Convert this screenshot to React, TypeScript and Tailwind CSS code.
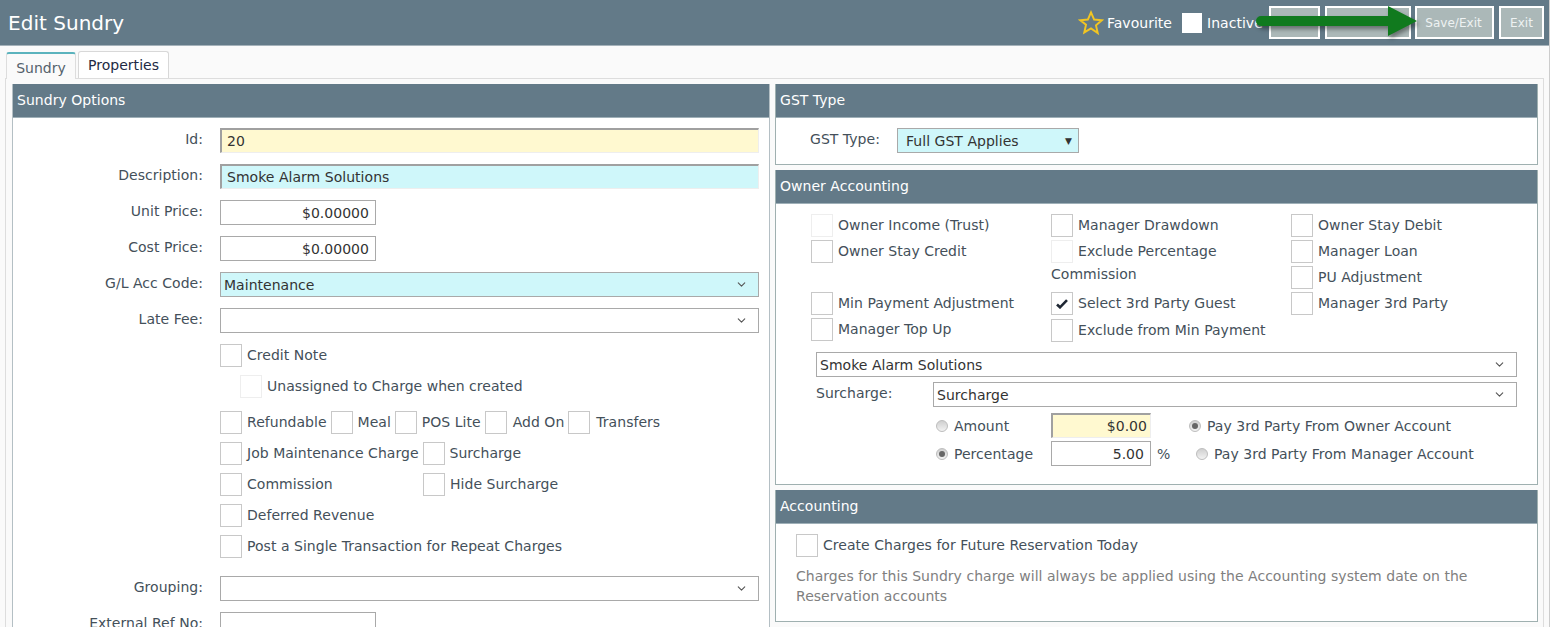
import React from 'react';
import { ChevronDown } from 'lucide-react';

const inputBase = 'h-[25px] border border-[#a9a9a9] text-[14px] text-[#333]';
const plainInput = `${inputBase} leading-[24px]`;
const insetInput = 'h-[25px] border-t-2 border-l-2 border-r border-b border-[#a0a0a0] border-r-[#eee] border-b-[#eee] text-[14px] text-[#333] leading-[22px]';

function Box({ faint, checked }: { faint?: boolean; checked?: boolean }) {
  return (
    <span className={`w-[22px] h-[23px] shrink-0 border bg-white flex items-center justify-center ${faint ? 'border-[#eeeeee]' : 'border-[#c8c8c8]'}`}>
      {checked && (
        <svg width="12" height="10" viewBox="0 0 12 10" fill="none" stroke="#1f2733" strokeWidth="2.6">
          <path d="M1 5.500l3 2.800L11 1.200" />
        </svg>
      )}
    </span>
  );
}

function CheckItem({ label, faint, checked, gap = 'ml-[5px]' }: { label: string; faint?: boolean; checked?: boolean; gap?: string }) {
  return (
    <span className="flex items-center">
      <Box faint={faint} checked={checked} />
      <span className={`${gap} text-[14px] text-[#44505a] whitespace-nowrap`}>{label}</span>
    </span>
  );
}

function Radio({ on }: { on?: boolean }) {
  return (
    <span className="w-[12px] h-[12px] rounded-full border border-[#bdbdbd] bg-gradient-to-b from-[#cfcfcf] to-[#f2f2f2] shrink-0 flex items-center justify-center">
      {on && <span className="w-[6px] h-[6px] rounded-full bg-[#666]" />}
    </span>
  );
}

function Dropdown({ value, tint, className }: { value?: string; tint?: boolean; className?: string }) {
  return (
    <div className={`${plainInput} ${tint ? 'bg-[#cff7fa]' : 'bg-white'} flex items-center justify-between pl-[3px] pr-[10px] ${className ?? ''}`}>
      <span className="pt-[1px]">{value}</span>
      <ChevronDown size={13} className="text-[#555]" />
    </div>
  );
}

function Field({ label, children }: { label: string; children: React.ReactNode }) {
  return (
    <div className="flex h-[25px]">
      <label className="w-[190px] text-right text-[14px] leading-[23px] text-[#44505a] shrink-0">{label}</label>
      <div className="ml-[17px] flex-1 min-w-0">{children}</div>
    </div>
  );
}

function PanelHead({ title }: { title: string }) {
  return <div className="h-[34px] bg-[#637a88] text-white text-[14px] leading-[32px] pl-[4px] border-b border-[#9fb0b8]">{title}</div>;
}

function OwnerCol({ children, width }: { children: React.ReactNode; width: string }) {
  return <div className={`${width} flex flex-col`}>{children}</div>;
}

export default function App() {
  return (
    <div className="relative w-[1550px] h-[627px] overflow-hidden bg-[#fafafa] border-r border-[#cccccc] tracking-[0.03px]" style={{ fontFamily: '"DejaVu Sans", Verdana, sans-serif' }}>
      {/* Top bar */}
      <div className="h-[46px] bg-[#637a88] border-b border-[#a5b2ba] flex items-center justify-between pl-[8px] pr-[5px]">
        <h1 className="text-[20px] text-white">Edit Sundry</h1>
        <div className="flex items-center">
          <svg width="26" height="26" viewBox="0 0 24 24" fill="none" stroke="#f2c521" strokeWidth="1.8" strokeLinejoin="miter">
            <path d="M12 2.200l2.900 6.600 7.100.7-5.400 4.700 1.600 7.100L12 17l-6.200 3.700 1.600-7.100L2 9.500l7.100-.7z" />
          </svg>
          <span className="ml-[3px] pt-[2px] text-[14px] text-white">Favourite</span>
          <span className="ml-[10px] w-[20px] h-[20px] bg-white" />
          <span className="ml-[5px] pt-[2px] w-[62px] text-[14px] text-white whitespace-nowrap">Inactive</span>
          <button className="w-[51px] h-[33px] border-2 border-white bg-[#abb8b8]" />
          <button className="ml-[5px] w-[86px] h-[33px] border-2 border-white bg-[#abb8b8]" />
          <button className="ml-[4px] w-[79px] h-[33px] border-2 border-white bg-[#abb8b8] text-[#eef2f2] text-[12px] pr-[2px]">Save/Exit</button>
          <button className="ml-[5px] w-[45px] h-[33px] border-2 border-white bg-[#abb8b8] text-[#eef2f2] text-[12px]">Exit</button>
        </div>
      </div>

      {/* Tabs */}
      <div className="flex items-end h-[32px] pl-[6px]">
        <div className="w-[70px] h-[27px] border-x border-[#dddddd] border-t-2 border-t-[#5bb3bd] rounded-t-[3px] bg-[#fafafa] text-[14px] text-[#55626c] text-center leading-[29px] relative z-10 -mb-px">Sundry</div>
        <div className="ml-[2px] w-[91px] h-[27px] border border-b-0 border-[#d8d8d8] rounded-t-[3px] bg-white text-[14px] text-[#222a44] text-center leading-[26px]">Properties</div>
      </div>

      <div className="ml-[5px] w-[1539px] h-[600px] border border-[#dddddd] bg-[#fafafa] pl-[6px] pr-[5px] pt-[5px] flex gap-[5px]">
        {/* Left column */}
        <div className="w-[758px] shrink-0 h-[700px] bg-white border-x border-[#b4bfc4]">
          <PanelHead title="Sundry Options" />
          <div className="pt-[10px] pr-[10px] flex flex-col gap-[11px]">
            <Field label="Id:">
              <div className={`${insetInput} bg-[#fff9d0] pl-[5px]`}>20</div>
            </Field>
            <Field label="Description:">
              <div className={`${insetInput} bg-[#cff7fa] pl-[5px]`}>Smoke Alarm Solutions</div>
            </Field>
            <Field label="Unit Price:">
              <div className={`${plainInput} w-[156px] text-right pr-[6px]`}>$0.00000</div>
            </Field>
            <Field label="Cost Price:">
              <div className={`${plainInput} w-[156px] text-right pr-[6px]`}>$0.00000</div>
            </Field>
            <Field label="G/L Acc Code:">
              <Dropdown value="Maintenance" tint />
            </Field>
            <Field label="Late Fee:">
              <Dropdown />
            </Field>
          </div>

          <div className="pl-[207px] pt-[11px] flex flex-col">
            <CheckItem label="Credit Note" />
            <div className="pl-[20px] mt-[8px]"><CheckItem label="Unassigned to Charge when created" faint /></div>
            <div className="flex mt-[13px] gap-[4px]">
              <CheckItem label="Refundable" />
              <CheckItem label="Meal" />
              <CheckItem label="POS Lite" />
              <CheckItem label="Add On" gap="ml-[6px]" />
              <CheckItem label="Transfers" gap="ml-[6px]" />
            </div>
            <div className="flex mt-[8px] gap-[4px]">
              <CheckItem label="Job Maintenance Charge" />
              <CheckItem label="Surcharge" />
            </div>
            <div className="flex mt-[8px]">
              <div className="w-[203px]"><CheckItem label="Commission" /></div>
              <CheckItem label="Hide Surcharge" />
            </div>
            <div className="mt-[8px]"><CheckItem label="Deferred Revenue" /></div>
            <div className="mt-[8px]"><CheckItem label="Post a Single Transaction for Repeat Charges" /></div>
          </div>

          <div className="pt-[18px] pr-[10px] flex flex-col gap-[11px]">
            <Field label="Grouping:">
              <Dropdown />
            </Field>
            <Field label="External Ref No:">
              <div className={`${plainInput} w-[156px]`} />
            </Field>
          </div>
        </div>

        {/* Right column */}
        <div className="flex-1 min-w-0 flex flex-col gap-[5px]">
          <section className="bg-white border-x border-b border-[#9fb0b0]">
            <PanelHead title="GST Type" />
            <div className="h-[46px] flex items-start pt-[10px] pl-[34px]">
              <span className="w-[87px] text-[14px] leading-[23px] text-[#44505a]">GST Type:</span>
              <div className={`${plainInput} w-[182px] bg-[#cff7fa] flex items-center justify-between pl-[8px] pr-[6px]`}>
                <span className="pt-[1px]">Full GST Applies</span>
                <span className="text-[9px] text-[#333]">▼</span>
              </div>
            </div>
          </section>

          <section className="bg-white border-x border-b border-[#9fb0b0]">
            <PanelHead title="Owner Accounting" />
            <div className="h-[280px] pt-[10px] pl-[35px]">
              <div className="flex h-[138px]">
                <OwnerCol width="w-[240px]">
                  <div className="h-[26px]"><CheckItem label="Owner Income (Trust)" faint /></div>
                  <div className="h-[52px]"><CheckItem label="Owner Stay Credit" /></div>
                  <div className="h-[26px]"><CheckItem label="Min Payment Adjustment" /></div>
                  <div className="h-[26px]"><CheckItem label="Manager Top Up" /></div>
                </OwnerCol>
                <OwnerCol width="w-[240px]">
                  <div className="h-[26px]"><CheckItem label="Manager Drawdown" /></div>
                  <div className="h-[26px]"><CheckItem label="Exclude Percentage" faint /></div>
                  <div className="h-[26px] text-[14px] leading-[17px] text-[#44505a]">Commission</div>
                  <div className="h-[26px]"><CheckItem label="Select 3rd Party Guest" checked /></div>
                  <div className="h-[26px] pt-px"><CheckItem label="Exclude from Min Payment" /></div>
                </OwnerCol>
                <OwnerCol width="w-[225px]">
                  <div className="h-[26px]"><CheckItem label="Owner Stay Debit" /></div>
                  <div className="h-[26px]"><CheckItem label="Manager Loan" /></div>
                  <div className="h-[26px]"><CheckItem label="PU Adjustment" /></div>
                  <div className="h-[26px]"><CheckItem label="Manager 3rd Party" /></div>
                </OwnerCol>
              </div>
              <div className="pl-[5px] pr-[20px] flex flex-col">
                <Dropdown value="Smoke Alarm Solutions" />
                <div className="flex mt-[5px]">
                  <span className="w-[117px] text-[14px] leading-[23px] text-[#44505a]">Surcharge:</span>
                  <Dropdown value="Surcharge" className="flex-1" />
                </div>
                <div className="flex items-center mt-[6px] pl-[120px] h-[25px]">
                  <Radio />
                  <span className="ml-[6px] w-[97px] pt-[2px] text-[14px] text-[#44505a]">Amount</span>
                  <div className={`${insetInput} w-[100px] bg-[#fff9d0] text-right pr-[3px]`}>$0.00</div>
                  <span className="ml-[38px]"><Radio on /></span>
                  <span className="ml-[6px] pt-[2px] text-[14px] text-[#44505a]">Pay 3rd Party From Owner Account</span>
                </div>
                <div className="flex items-center mt-[3px] pl-[120px] h-[25px]">
                  <Radio on />
                  <span className="ml-[6px] w-[97px] pt-[2px] text-[14px] text-[#44505a]">Percentage</span>
                  <div className={`${plainInput} w-[100px] text-right pr-[6px]`}>5.00</div>
                  <span className="ml-[6px] w-[39px] pt-[2px] text-[14px] text-[#44505a]">%</span>
                  <Radio />
                  <span className="ml-[6px] pt-[2px] text-[14px] text-[#44505a]">Pay 3rd Party From Manager Account</span>
                </div>
              </div>
            </div>
          </section>

          <section className="bg-white border-x border-b border-[#9fb0b0]">
            <PanelHead title="Accounting" />
            <div className="h-[97px] pt-[10px] pl-[20px] pr-[40px]">
              <CheckItem label="Create Charges for Future Reservation Today" />
              <p className="mt-[9px] text-[14px] leading-[20px] text-[#808080]">
                Charges for this Sundry charge will always be applied using the Accounting system date on the Reservation accounts
              </p>
            </div>
          </section>
        </div>
      </div>

      {/* Annotation arrow */}
      <svg className="absolute left-[1250px] top-0 drop-shadow-[2px_3px_2px_rgba(0,0,0,0.4)]" width="172" height="40" viewBox="0 0 172 40">
        <path d="M11 16h127V6l29 15-29 15V26H11a5 5 0 0 1 0-10z" fill="#107a1e" />
      </svg>
    </div>
  );
}
